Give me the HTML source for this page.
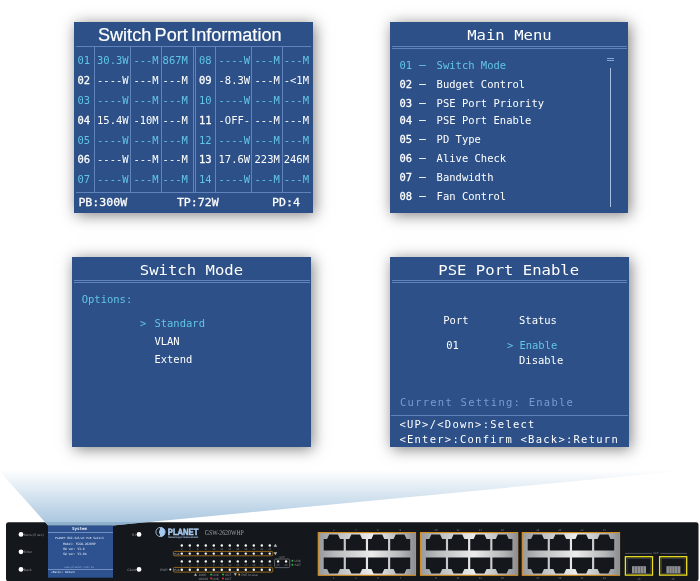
<!DOCTYPE html>
<html lang="en"><head><meta charset="utf-8"><title>Switch LCD menus</title>
<style>
html,body{margin:0;padding:0;background:#fff;}
body{will-change:transform;width:700px;height:581px;position:relative;overflow:hidden;font-family:"DejaVu Sans Mono","Liberation Mono",monospace;}
.p{position:absolute;background:#2c5087;box-shadow:2px 2px 14px rgba(0,0,0,.5);}
.t{position:absolute;white-space:pre;font-size:10.5px;line-height:12px;color:#fff;}
.t,.h{transform:scaleY(.94);}
.c{color:#62c4e6;}
i{font-style:normal;position:relative;top:-1.5px;left:.8px;-webkit-text-stroke:.3px currentColor;}
b{font-weight:normal;-webkit-text-stroke:.27px #fff;}
.m{color:#7b9bd0;}
.h{position:absolute;white-space:pre;font-size:15.6px;line-height:18px;color:#fff;}
.f{font-size:11.6px;line-height:14px;}
.ls{letter-spacing:1.25px;}
.bd{-webkit-text-stroke:.27px #fff;}
.hl{position:absolute;height:1px;background:#6083bc;}
.vl{position:absolute;width:1px;background:#6083bc;}
.ttl{position:absolute;white-space:pre;font-family:"Liberation Sans","DejaVu Sans",sans-serif;font-size:17.6px;line-height:20px;color:#fff;transform-origin:0 50%;}
#dev{position:absolute;left:0;top:460px;}
</style></head><body>

<div class="p" style="left:74px;top:22px;width:239px;height:191px"></div>
<span class="ttl" id="ttl" style="left:97.9px;top:25.3px;transform:scaleX(1.027);word-spacing:-1.6px;-webkit-text-stroke:.2px #fff">Switch Port Information</span>
<div class="hl" style="left:76px;top:46px;width:235px"></div>
<div class="hl" style="left:76px;top:191.5px;width:235px"></div>
<div class="vl" style="left:94px;top:46px;height:146px"></div>
<div class="vl" style="left:130px;top:46px;height:146px"></div>
<div class="vl" style="left:161px;top:46px;height:146px"></div>
<div class="vl" style="left:192.5px;top:46px;height:146px"></div>
<div class="vl" style="left:195.3px;top:46px;height:146px"></div>
<div class="vl" style="left:215px;top:46px;height:146px"></div>
<div class="vl" style="left:251px;top:46px;height:146px"></div>
<div class="vl" style="left:282.2px;top:46px;height:146px"></div>
<span class="t c" style="left:77.4px;top:54.4px">01</span>
<span class="t c" style="left:97.0px;top:54.4px">30.3W</span>
<span class="t c" style="left:133.4px;top:54.4px">---M</span>
<span class="t c" style="left:162.6px;top:54.4px">867M</span>
<span class="t c" style="left:198.9px;top:54.4px">08</span>
<span class="t c" style="left:218.5px;top:54.4px">----W</span>
<span class="t c" style="left:254.5px;top:54.4px">---M</span>
<span class="t c" style="left:283.7px;top:54.4px">---M</span>
<span class="t  bd" style="left:77.4px;top:74.2px">02</span>
<span class="t " style="left:97.0px;top:74.2px">----W</span>
<span class="t " style="left:133.4px;top:74.2px">---M</span>
<span class="t " style="left:162.6px;top:74.2px">---M</span>
<span class="t  bd" style="left:198.9px;top:74.2px">09</span>
<span class="t " style="left:218.5px;top:74.2px">-8.3W</span>
<span class="t " style="left:254.5px;top:74.2px">---M</span>
<span class="t " style="left:283.7px;top:74.2px">-&lt;1M</span>
<span class="t c" style="left:77.4px;top:94.0px">03</span>
<span class="t c" style="left:97.0px;top:94.0px">----W</span>
<span class="t c" style="left:133.4px;top:94.0px">---M</span>
<span class="t c" style="left:162.6px;top:94.0px">---M</span>
<span class="t c" style="left:198.9px;top:94.0px">10</span>
<span class="t c" style="left:218.5px;top:94.0px">----W</span>
<span class="t c" style="left:254.5px;top:94.0px">---M</span>
<span class="t c" style="left:283.7px;top:94.0px">---M</span>
<span class="t  bd" style="left:77.4px;top:113.7px">04</span>
<span class="t " style="left:97.0px;top:113.7px">15.4W</span>
<span class="t " style="left:133.4px;top:113.7px">-10M</span>
<span class="t " style="left:162.6px;top:113.7px">---M</span>
<span class="t  bd" style="left:198.9px;top:113.7px">11</span>
<span class="t " style="left:218.5px;top:113.7px">-OFF-</span>
<span class="t " style="left:254.5px;top:113.7px">---M</span>
<span class="t " style="left:283.7px;top:113.7px">---M</span>
<span class="t c" style="left:77.4px;top:133.5px">05</span>
<span class="t c" style="left:97.0px;top:133.5px">----W</span>
<span class="t c" style="left:133.4px;top:133.5px">---M</span>
<span class="t c" style="left:162.6px;top:133.5px">---M</span>
<span class="t c" style="left:198.9px;top:133.5px">12</span>
<span class="t c" style="left:218.5px;top:133.5px">----W</span>
<span class="t c" style="left:254.5px;top:133.5px">---M</span>
<span class="t c" style="left:283.7px;top:133.5px">---M</span>
<span class="t  bd" style="left:77.4px;top:153.3px">06</span>
<span class="t " style="left:97.0px;top:153.3px">----W</span>
<span class="t " style="left:133.4px;top:153.3px">---M</span>
<span class="t " style="left:162.6px;top:153.3px">---M</span>
<span class="t  bd" style="left:198.9px;top:153.3px">13</span>
<span class="t " style="left:218.5px;top:153.3px">17.6W</span>
<span class="t " style="left:254.5px;top:153.3px">223M</span>
<span class="t " style="left:283.7px;top:153.3px">246M</span>
<span class="t c" style="left:77.4px;top:173.1px">07</span>
<span class="t c" style="left:97.0px;top:173.1px">----W</span>
<span class="t c" style="left:133.4px;top:173.1px">---M</span>
<span class="t c" style="left:162.6px;top:173.1px">---M</span>
<span class="t c" style="left:198.9px;top:173.1px">14</span>
<span class="t c" style="left:218.5px;top:173.1px">----W</span>
<span class="t c" style="left:254.5px;top:173.1px">---M</span>
<span class="t c" style="left:283.7px;top:173.1px">---M</span>
<span class="t f bd" style="left:78.4px;top:195.3px">PB:300W</span>
<span class="t f bd" style="left:176.9px;top:195.3px">TP:72W</span>
<span class="t f bd" style="left:272.0px;top:195.3px">PD:4</span>
<div class="p" style="left:390px;top:22px;width:238.3px;height:191px"></div>
<span class="h" style="left:467.2px;top:26.3px">Main Menu</span>
<div class="hl" style="left:392px;top:46.2px;width:235px"></div>
<div class="hl" style="left:392px;top:48.2px;width:235px"></div>
<span class="t c" style="left:399.4px;top:59.1px">01 <i>—</i></span>
<span class="t c" style="left:436.6px;top:59.1px">Switch Mode</span>
<span class="t " style="left:399.4px;top:78.2px"><b>02 <i>—</i></b></span>
<span class="t " style="left:436.6px;top:78.2px">Budget Control</span>
<span class="t " style="left:399.4px;top:96.8px"><b>03 <i>—</i></b></span>
<span class="t " style="left:436.6px;top:96.8px">PSE Port Priority</span>
<span class="t " style="left:399.4px;top:113.8px"><b>04 <i>—</i></b></span>
<span class="t " style="left:436.6px;top:113.8px">PSE Port Enable</span>
<span class="t " style="left:399.4px;top:132.8px"><b>05 <i>—</i></b></span>
<span class="t " style="left:436.6px;top:132.8px">PD Type</span>
<span class="t " style="left:399.4px;top:151.8px"><b>06 <i>—</i></b></span>
<span class="t " style="left:436.6px;top:151.8px">Alive Check</span>
<span class="t " style="left:399.4px;top:170.8px"><b>07 <i>—</i></b></span>
<span class="t " style="left:436.6px;top:170.8px">Bandwidth</span>
<span class="t " style="left:399.4px;top:189.9px"><b>08 <i>—</i></b></span>
<span class="t " style="left:436.6px;top:189.9px">Fan Control</span>
<div class="hl" style="left:606.6px;top:57.6px;width:7.4px;background:#8aa6d4"></div>
<div class="hl" style="left:606.6px;top:60px;width:7.4px;background:#8aa6d4"></div>
<div class="vl" style="left:610px;top:67.5px;height:139px;background:#a9bfe0"></div>
<div class="p" style="left:72.2px;top:257px;width:238.8px;height:190.4px"></div>
<span class="h" style="left:139.8px;top:260.5px">Switch Mode</span>
<div class="hl" style="left:74px;top:280px;width:235.5px"></div>
<div class="hl" style="left:74px;top:282px;width:235.5px"></div>
<span class="t c" style="left:81.7px;top:293.4px">Options:</span>
<span class="t c" style="left:140.0px;top:317.2px">&gt;</span>
<span class="t c" style="left:154.4px;top:317.2px">Standard</span>
<span class="t " style="left:154.4px;top:335.0px">VLAN</span>
<span class="t " style="left:154.4px;top:352.8px">Extend</span>
<div class="p" style="left:390.3px;top:257px;width:238.3px;height:190.4px"></div>
<span class="h" style="left:438.3px;top:260.5px">PSE Port Enable</span>
<div class="hl" style="left:392px;top:280px;width:235px"></div>
<div class="hl" style="left:392px;top:282px;width:235px"></div>
<span class="t " style="left:443.3px;top:314.0px">Port</span>
<span class="t " style="left:519.0px;top:314.0px">Status</span>
<span class="t " style="left:446.3px;top:339.1px">01</span>
<span class="t c" style="left:506.9px;top:339.1px">&gt;</span>
<span class="t c" style="left:519.4px;top:339.1px">Enable</span>
<span class="t " style="left:519.0px;top:354.0px">Disable</span>
<span class="t m ls" style="left:400.0px;top:396.0px">Current Setting: Enable</span>
<div class="hl" style="left:391px;top:414.6px;width:237px"></div>
<span class="t ls" style="left:399.4px;top:418.0px">&lt;UP&gt;/&lt;Down&gt;:Select</span>
<span class="t ls" style="left:399.4px;top:433.0px">&lt;Enter&gt;:Confirm &lt;Back&gt;:Return</span>
<svg id="dev" text-rendering="geometricPrecision" width="700" height="121" viewBox="0 460 700 121">
<defs>
<linearGradient id="bm" x1="0" y1="470" x2="0" y2="526" gradientUnits="userSpaceOnUse">
<stop offset="0" stop-color="#a4c3dd" stop-opacity="0"/><stop offset="1" stop-color="#a4c3dd" stop-opacity="1"/></linearGradient>
<linearGradient id="sv" x1="0" y1="0" x2="1" y2="0">
<stop offset="0" stop-color="#96999c"/><stop offset=".18" stop-color="#b9bbbd"/><stop offset=".55" stop-color="#ececec"/><stop offset=".85" stop-color="#b4b6b8"/><stop offset="1" stop-color="#8b8d90"/></linearGradient>
</defs>
<rect x="6" y="522.3" width="692.5" height="58.9" rx="2.5" fill="#14171b"/>
<polygon points="48,525.4 0,471.7 0,462 700,462 700,469.2 113,525.4" fill="url(#bm)"/>
<polygon points="45.3,522.3 48,525.4 113,525.4 145,522.3" fill="#8eb0cd"/>
<rect x="48" y="525.6" width="65" height="52.1" fill="#2d528f"/>
<g font-family="DejaVu Sans Mono, Liberation Mono, monospace" fill="#e8eefa">
<text x="79.6" y="530.4" font-size="4.2" font-weight="bold" text-anchor="middle">System</text>
<rect x="48" y="532.1" width="65" height=".6" fill="#9db8e4"/>
<text x="55" y="538.6" font-size="2.9">PLANET 802.3af/at PoE Switch</text>
<text x="63" y="545.2" font-size="3">Model: FGSW-2620HP</text>
<text x="63" y="550.1" font-size="3">HW ver: V3.0</text>
<text x="63" y="554.6" font-size="3">SW ver: V3.0b</text>
<text x="64.4" y="568" font-size="2.9" fill="#8eabdd">www.planet.com.tw</text>
<rect x="48" y="569.2" width="65" height=".6" fill="#9db8e4"/>
<text x="51" y="572.5" font-size="2.9">&lt;Back&gt;: Return</text>
</g>
<g font-family="Liberation Sans, sans-serif" font-size="3.4" fill="#8f959c">
<circle cx="21" cy="534.4" r="2.4" fill="#fff"/><text x="23.8" y="535.6">Menu (5 sec)</text>
<circle cx="21" cy="551.8" r="2.4" fill="#fff"/><text x="23.8" y="553">Enter</text>
<circle cx="21" cy="569.4" r="2.4" fill="#fff"/><text x="23.8" y="570.6">Back</text>
<circle cx="139" cy="534.4" r="2.4" fill="#fff"/><text x="136" y="535.6" text-anchor="end">RJ</text>
<circle cx="139" cy="569.4" r="2.4" fill="#fff"/><text x="136" y="570.6" text-anchor="end">Client</text>
</g>
<circle cx="160.5" cy="532" r="4.6" fill="#14171b" stroke="#a5c8ee" stroke-width=".9"/>
<path d="M160.2 527.6c1.600-.4 3.600.5 4.500 2.400.8 1.900.3 4.500-1.400 5.700-1 .7-2.600 1-3.600.5.600-.9.300-1.800-.3-2.600-.6-.9-.7-1.700-.2-2.600.500-1.100 1-2.200 1-3.400z" fill="#a5c8ee"/>
<text x="167.800" y="534.9" font-family="Liberation Sans, sans-serif" font-weight="bold" font-size="9.2" fill="#a5c8ee" stroke="#a5c8ee" stroke-width=".55" textLength="30.6" lengthAdjust="spacingAndGlyphs">PLANET</text>
<text x="168.3" y="538" font-family="Liberation Sans, sans-serif" font-weight="bold" font-size="2.6" fill="#a5c8ee" textLength="30" lengthAdjust="spacingAndGlyphs">Networking &amp; Communication</text>
<text x="204.800" y="534.7" font-family="Liberation Serif, serif" font-size="7.4" fill="#9aa0a8" textLength="39" lengthAdjust="spacingAndGlyphs">GSW-2620WHP</text>
<g fill="#fff">
<circle cx="181.8" cy="545.5" r="1.2"/>
<circle cx="181.8" cy="553.6" r="1.2"/>
<circle cx="181.8" cy="561.4" r="1.2"/>
<circle cx="181.8" cy="569.7" r="1.2"/>
<circle cx="189.8" cy="545.5" r="1.2"/>
<circle cx="189.8" cy="553.6" r="1.2"/>
<circle cx="189.8" cy="561.4" r="1.2"/>
<circle cx="189.8" cy="569.7" r="1.2"/>
<circle cx="197.8" cy="545.5" r="1.2"/>
<circle cx="197.8" cy="553.6" r="1.2"/>
<circle cx="197.8" cy="561.4" r="1.2"/>
<circle cx="197.8" cy="569.7" r="1.2"/>
<circle cx="205.8" cy="545.5" r="1.2"/>
<circle cx="205.8" cy="553.6" r="1.2"/>
<circle cx="205.8" cy="561.4" r="1.2"/>
<circle cx="205.8" cy="569.7" r="1.2"/>
<circle cx="213.8" cy="545.5" r="1.2"/>
<circle cx="213.8" cy="553.6" r="1.2"/>
<circle cx="213.8" cy="561.4" r="1.2"/>
<circle cx="213.8" cy="569.7" r="1.2"/>
<circle cx="221.8" cy="545.5" r="1.2"/>
<circle cx="221.8" cy="553.6" r="1.2"/>
<circle cx="221.8" cy="561.4" r="1.2"/>
<circle cx="221.8" cy="569.7" r="1.2"/>
<circle cx="229.8" cy="545.5" r="1.2"/>
<circle cx="229.8" cy="553.6" r="1.2"/>
<circle cx="229.8" cy="561.4" r="1.2"/>
<circle cx="229.8" cy="569.7" r="1.2"/>
<circle cx="237.8" cy="545.5" r="1.2"/>
<circle cx="237.8" cy="553.6" r="1.2"/>
<circle cx="237.8" cy="561.4" r="1.2"/>
<circle cx="237.8" cy="569.7" r="1.2"/>
<circle cx="245.8" cy="545.5" r="1.2"/>
<circle cx="245.8" cy="553.6" r="1.2"/>
<circle cx="245.8" cy="561.4" r="1.2"/>
<circle cx="245.8" cy="569.7" r="1.2"/>
<circle cx="253.8" cy="545.5" r="1.2"/>
<circle cx="253.8" cy="553.6" r="1.2"/>
<circle cx="253.8" cy="561.4" r="1.2"/>
<circle cx="253.8" cy="569.7" r="1.2"/>
<circle cx="261.8" cy="545.5" r="1.2"/>
<circle cx="261.8" cy="553.6" r="1.2"/>
<circle cx="261.8" cy="561.4" r="1.2"/>
<circle cx="261.8" cy="569.7" r="1.2"/>
<circle cx="269.8" cy="545.5" r="1.2"/>
<circle cx="269.8" cy="553.6" r="1.2"/>
<circle cx="269.8" cy="561.4" r="1.2"/>
<circle cx="269.8" cy="569.7" r="1.2"/>
<circle cx="278.1" cy="561.4" r="1.2"/><circle cx="286.1" cy="561.4" r="1.2"/><circle cx="170.3" cy="569.5" r="1"/>
</g>
<rect x="173.4" y="551.4" width="99.4" height="4.4" rx="1.2" fill="none" stroke="#c98a1d" stroke-width=".7"/>
<rect x="173.4" y="567.4" width="99.4" height="4.7" rx="1.2" fill="none" stroke="#c98a1d" stroke-width=".7"/>
<g font-family="Liberation Sans, sans-serif" font-size="2.8" fill="#7d838a" text-anchor="middle">
<text x="181.8" y="550.4">2</text><text x="181.8" y="566.3">1</text>
<text x="189.8" y="550.4">4</text><text x="189.8" y="566.3">3</text>
<text x="197.8" y="550.4">6</text><text x="197.8" y="566.3">5</text>
<text x="205.8" y="550.4">8</text><text x="205.8" y="566.3">7</text>
<text x="213.8" y="550.4">10</text><text x="213.8" y="566.3">9</text>
<text x="221.8" y="550.4">12</text><text x="221.8" y="566.3">11</text>
<text x="229.8" y="550.4">14</text><text x="229.8" y="566.3">13</text>
<text x="237.8" y="550.4">16</text><text x="237.8" y="566.3">15</text>
<text x="245.8" y="550.4">18</text><text x="245.8" y="566.3">17</text>
<text x="253.8" y="550.4">20</text><text x="253.8" y="566.3">19</text>
<text x="261.8" y="550.4">22</text><text x="261.8" y="566.3">21</text>
<text x="269.8" y="550.4">24</text><text x="269.8" y="566.3">23</text>
<text x="278.1" y="566.3">25</text><text x="286.1" y="566.3">26</text>
<text x="282" y="557.6">SFP</text>
<text x="177" y="554.6" fill="#b9bdc2">PoE</text><text x="177" y="570.7" fill="#b9bdc2">PoE</text>
</g>
<rect x="274.6" y="559" width="15.1" height="8.6" rx="1.2" fill="none" stroke="#8f949a" stroke-width=".6"/>
<path d="M273.6 546.8l1.800-3 1.800 3zM273.6 552.200l1.800 3 1.800-3z" fill="#b5b9be"/>
<g font-family="Liberation Sans, sans-serif" font-size="3.2" fill="#8f959c">
<text x="160" y="570.6">PWR</text>
<circle cx="292.4" cy="560.7" r="1" fill="#3cae3c"/><circle cx="292.4" cy="564.8" r="1" fill="#3cae3c"/>
<text x="294.6" y="561.8">LNK</text><text x="294.6" y="565.9">ACT</text>
<path d="M194 575.800l1.500-2.600 1.500 2.600zM233.800 573.300l1.500 2.600 1.500-2.600z" fill="#b5b9be"/>
<text x="198.8" y="575.8">1000</text><rect x="210.200" y="573.700" width="1.700" height="1.700" fill="#39b53a"/><text x="212.600" y="575.8">LNK</text>
<circle cx="223" cy="574.600" r="1" fill="#39b53a"/><text x="225" y="575.8">ACT</text>
<rect x="238.400" y="573.700" width="1.700" height="1.700" fill="#f0a020"/><text x="241.400" y="575.8">PoE In-Use</text>
<text x="198.2" y="579.6">10/100</text><rect x="210.200" y="577.500" width="1.700" height="1.700" fill="#e03030"/><text x="212.600" y="579.6">LNK</text>
<circle cx="223" cy="578.400" r="1" fill="#e03030"/><text x="225" y="579.6">ACT</text>
</g>
<g font-family="Liberation Sans, sans-serif" font-size="2.8" fill="#7d838a" text-anchor="middle">
<rect x="318.2" y="532.6" width="97.4" height="42.700" fill="url(#sv)" stroke="#e0921c" stroke-width="1"/>
<path transform="translate(323.7 534.4)" d="M0 16.2V4.5H3.4L5.5 0H14.2L16.3 4.5H20V16.2Z" fill="#14171b"/><path transform="translate(323.7 557.4)" d="M0 0V11.5H3.4L5.5 16.2H14.2L16.3 11.5H20V0Z" fill="#14171b"/>
<text x="333.7" y="531">2</text><text x="333.7" y="579.4">1</text>
<path transform="translate(345.87 534.4)" d="M0 16.2V4.5H3.4L5.5 0H14.2L16.3 4.5H20V16.2Z" fill="#14171b"/><path transform="translate(345.87 557.4)" d="M0 0V11.5H3.4L5.5 16.2H14.2L16.3 11.5H20V0Z" fill="#14171b"/>
<text x="355.87" y="531">4</text><text x="355.87" y="579.4">3</text>
<path transform="translate(368.04 534.4)" d="M0 16.2V4.5H3.4L5.5 0H14.2L16.3 4.5H20V16.2Z" fill="#14171b"/><path transform="translate(368.04 557.4)" d="M0 0V11.5H3.4L5.5 16.2H14.2L16.3 11.5H20V0Z" fill="#14171b"/>
<text x="378.04" y="531">6</text><text x="378.04" y="579.4">5</text>
<path transform="translate(390.21 534.4)" d="M0 16.2V4.5H3.4L5.5 0H14.2L16.3 4.5H20V16.2Z" fill="#14171b"/><path transform="translate(390.21 557.4)" d="M0 0V11.5H3.4L5.5 16.2H14.2L16.3 11.5H20V0Z" fill="#14171b"/>
<text x="400.21" y="531">8</text><text x="400.21" y="579.4">7</text>
<rect x="420.4" y="532.6" width="97.4" height="42.700" fill="url(#sv)" stroke="#e0921c" stroke-width="1"/>
<path transform="translate(425.9 534.4)" d="M0 16.2V4.5H3.4L5.5 0H14.2L16.3 4.5H20V16.2Z" fill="#14171b"/><path transform="translate(425.9 557.4)" d="M0 0V11.5H3.4L5.5 16.2H14.2L16.3 11.5H20V0Z" fill="#14171b"/>
<text x="435.9" y="531">10</text><text x="435.9" y="579.4">9</text>
<path transform="translate(448.07 534.4)" d="M0 16.2V4.5H3.4L5.5 0H14.2L16.3 4.5H20V16.2Z" fill="#14171b"/><path transform="translate(448.07 557.4)" d="M0 0V11.5H3.4L5.5 16.2H14.2L16.3 11.5H20V0Z" fill="#14171b"/>
<text x="458.07" y="531">12</text><text x="458.07" y="579.4">11</text>
<path transform="translate(470.24 534.4)" d="M0 16.2V4.5H3.4L5.5 0H14.2L16.3 4.5H20V16.2Z" fill="#14171b"/><path transform="translate(470.24 557.4)" d="M0 0V11.5H3.4L5.5 16.2H14.2L16.3 11.5H20V0Z" fill="#14171b"/>
<text x="480.24" y="531">14</text><text x="480.24" y="579.4">13</text>
<path transform="translate(492.41 534.4)" d="M0 16.2V4.5H3.4L5.5 0H14.2L16.3 4.5H20V16.2Z" fill="#14171b"/><path transform="translate(492.41 557.4)" d="M0 0V11.5H3.4L5.5 16.2H14.2L16.3 11.5H20V0Z" fill="#14171b"/>
<text x="502.41" y="531">16</text><text x="502.41" y="579.4">15</text>
<rect x="522.2" y="532.6" width="97.4" height="42.700" fill="url(#sv)" stroke="#e0921c" stroke-width="1"/>
<path transform="translate(527.7 534.4)" d="M0 16.2V4.5H3.4L5.5 0H14.2L16.3 4.5H20V16.2Z" fill="#14171b"/><path transform="translate(527.7 557.4)" d="M0 0V11.5H3.4L5.5 16.2H14.2L16.3 11.5H20V0Z" fill="#14171b"/>
<text x="537.7" y="531">18</text><text x="537.7" y="579.4">17</text>
<path transform="translate(549.87 534.4)" d="M0 16.2V4.5H3.4L5.5 0H14.2L16.3 4.5H20V16.2Z" fill="#14171b"/><path transform="translate(549.87 557.4)" d="M0 0V11.5H3.4L5.5 16.2H14.2L16.3 11.5H20V0Z" fill="#14171b"/>
<text x="559.87" y="531">20</text><text x="559.87" y="579.4">19</text>
<path transform="translate(572.04 534.4)" d="M0 16.2V4.5H3.4L5.5 0H14.2L16.3 4.5H20V16.2Z" fill="#14171b"/><path transform="translate(572.04 557.4)" d="M0 0V11.5H3.4L5.5 16.2H14.2L16.3 11.5H20V0Z" fill="#14171b"/>
<text x="582.04" y="531">22</text><text x="582.04" y="579.4">21</text>
<path transform="translate(594.21 534.4)" d="M0 16.2V4.5H3.4L5.5 0H14.2L16.3 4.5H20V16.2Z" fill="#14171b"/><path transform="translate(594.21 557.4)" d="M0 0V11.5H3.4L5.5 16.2H14.2L16.3 11.5H20V0Z" fill="#14171b"/>
<text x="604.21" y="531">24</text><text x="604.21" y="579.4">23</text>
<text x="639" y="579.6">25</text><text x="673" y="579.6">26</text><text x="656" y="554.4">SFP</text>
</g>
<path d="M625 553.400H652M660.400 553.400H687" stroke="#8f949a" stroke-width=".5"/>
<rect x="625.4" y="556.700" width="27.100" height="18.400" fill="#14171b" stroke="#efe11e" stroke-width="1.300"/>
<rect x="627.1" y="558.400" width="23.700" height="15" fill="none" stroke="#4a4e54" stroke-width=".6"/>
<rect x="632" y="566.200" width="14" height="7.100" fill="#8e8f91"/>
<rect x="634.5" y="566.800" width=".6" height="6.500" fill="#4a4c50"/>
<rect x="637.3" y="566.800" width=".6" height="6.500" fill="#4a4c50"/>
<rect x="640.1" y="566.800" width=".6" height="6.500" fill="#4a4c50"/>
<rect x="642.9" y="566.800" width=".6" height="6.500" fill="#4a4c50"/>
<rect x="659.6" y="556.700" width="27.100" height="18.400" fill="#14171b" stroke="#efe11e" stroke-width="1.300"/>
<rect x="661.3" y="558.400" width="23.700" height="15" fill="none" stroke="#4a4e54" stroke-width=".6"/>
<rect x="666.4" y="566.200" width="14" height="7.100" fill="#8e8f91"/>
<rect x="668.9" y="566.800" width=".6" height="6.500" fill="#4a4c50"/>
<rect x="671.7" y="566.800" width=".6" height="6.500" fill="#4a4c50"/>
<rect x="674.5" y="566.800" width=".6" height="6.500" fill="#4a4c50"/>
<rect x="677.3" y="566.800" width=".6" height="6.500" fill="#4a4c50"/>
</svg>
</body></html>
